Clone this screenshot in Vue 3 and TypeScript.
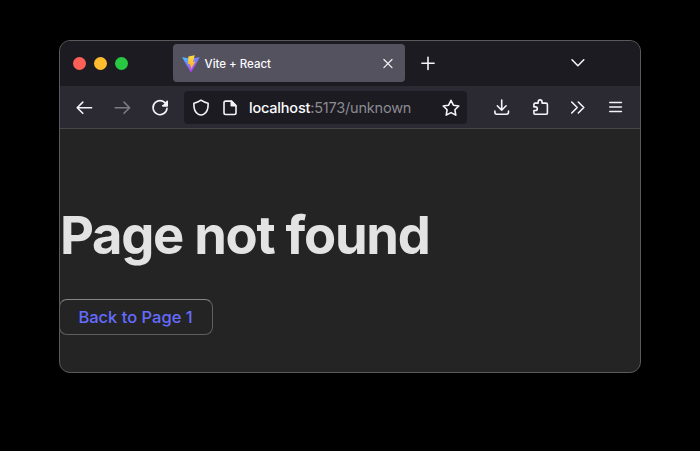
<script setup lang="ts">
interface Icon {
  name: string
  d: string
  muted?: boolean
}

const navigation: Icon[] = [
  { name: 'Back', d: 'M17.6 10.7H3.2M8.8 5.1l-5.6 5.6 5.6 5.6' },
  { name: 'Forward', d: 'M3.2 10.7h14.4M12 5.1l5.6 5.6-5.6 5.6', muted: true },
  { name: 'Reload', d: 'M16.6 8.2A7 7 0 1 0 17 11.4M17.2 4.2v4.5h-4.5' },
]

const tools: Icon[] = [
  { name: 'Downloads', d: 'M9.7 3v10M5.300 8.800l4.400 4.400 4.400-4.400M2.900 14v1.300q0 1.900 1.900 1.900h9.800q1.900 0 1.900-1.900V14' },
  { name: 'Extensions', d: 'M3.900 7.500q0-1.400 1.400-1.400h2.900V4.900q0-2 1.900-2t1.900 2v1.200h4q1.400 0 1.400 1.400v8.400q0 1.400-1.400 1.400H5.300q-1.400 0-1.400-1.400v-2.400h1.400q2 0 2-1.800t-2-1.800H3.900z' },
  { name: 'More tools', d: 'M3.7 5l5.500 5.500-5.500 5.500M10.300 5l5.500 5.500-5.500 5.500' },
  { name: 'Menu', d: 'M3.800 5.500h11.600M3.800 10h11.600M3.800 14.500h11.600' },
]

const lights: string[] = ['close', 'minimize', 'zoom']
</script>

<template>
  <main class="desktop">
    <section class="window">
      <header class="tabs">
        <div class="lights">
          <span v-for="light in lights" :key="light" class="light" :class="light"></span>
        </div>
        <div class="tab">
          <svg class="logo" viewBox="0 0 18 18">
            <defs>
              <linearGradient id="body" x1="0" y1="0" x2="0.6" y2="1">
                <stop offset="0" stop-color="#41c6ff" />
                <stop offset="1" stop-color="#bd34fe" />
              </linearGradient>
              <linearGradient id="bolt" x1="0" y1="0" x2="0" y2="1">
                <stop offset="0" stop-color="#ffdd4a" />
                <stop offset="1" stop-color="#ffa31a" />
              </linearGradient>
            </defs>
            <path d="M.8 2.3 9 3.7l8.1-1.4q.6 0 .4.5L9.4 16.9q-.4.6-.8 0L.4 2.8q-.2-.4.4-.5z" fill="url(#body)" />
            <path d="M12.700.2 6.400 1.500 6 9.200l2.200-.4-.5 2.700 1.500-.4-.6 4 4.700-8.500-2.200.4z" fill="url(#bolt)" />
          </svg>
          <span class="title">Vite + React</span>
          <svg class="icon small" viewBox="0 0 12 12"><path d="M1.9 1.500l8.100 8.100M10 1.500L1.900 9.600" /></svg>
        </div>
        <svg class="icon plus" viewBox="0 0 20 20"><path d="M10 4.200v12.200M3.900 10.300h12.200" /></svg>
        <svg class="icon chevron" viewBox="0 0 20 20"><path d="M4 6.800l5.900 5.900 5.900-5.900" /></svg>
      </header>

      <nav class="toolbar">
        <div class="navigation">
          <svg v-for="icon in navigation" :key="icon.name" class="icon" :class="{ muted: icon.muted }" viewBox="0 0 20 20">
            <path :d="icon.d" />
            <path v-if="icon.name === 'Reload'" class="solid" d="M17.200 4.800v3.900h-3.900z" />
          </svg>
        </div>
        <div class="address">
          <svg class="icon" viewBox="0 0 20 20"><path d="M10 2.200q3.300 2.400 7.100 3v1.700q0 6.600-4.200 9.200-2.900 1.900-5.800 0Q2.900 13.500 2.900 6.900V5.200q3.800-.6 7.100-3z" /></svg>
          <svg class="icon document" viewBox="0 0 20 20">
            <path d="M5.700 3.100h5.900l4.400 4.400v7.300q0 1.700-1.700 1.700H5.700q-1.700 0-1.700-1.700v-10q0-1.700 1.700-1.700z" />
            <path class="solid" d="M11.300 3.300v4.500h4.500z" />
          </svg>
          <span class="url"><b>localhost</b>:5173/unknown</span>
          <svg class="icon star" viewBox="0 0 20 20"><path d="M10 2.300l2.400 4.900 5.400.8-3.900 3.800.9 5.300-4.800-2.500-4.800 2.500.9-5.300L2.200 8l5.400-.8z" /></svg>
        </div>
        <div class="tools">
          <svg v-for="icon in tools" :key="icon.name" class="icon" viewBox="0 0 20 20"><path :d="icon.d" /></svg>
        </div>
      </nav>

      <article class="page">
        <h1>Page not found</h1>
        <button type="button">Back to Page 1</button>
      </article>
    </section>
  </main>
</template>

<style>
body {
  background: #000;
}
</style>

<style scoped>
.desktop {
  box-sizing: border-box;
  height: 451px;
  padding: 40px 59px 78px;
  background: #000;
  font-family: Inter, "Liberation Sans", sans-serif;
}
.window {
  box-sizing: border-box;
  height: 333px;
  display: flex;
  flex-direction: column;
  border: 1px solid #5a5a5c;
  border-radius: 11px;
  background: #242424;
  overflow: hidden;
}
.tabs {
  box-sizing: border-box;
  height: 45px;
  flex: none;
  display: flex;
  align-items: center;
  padding: 0 0 1px 12.5px;
  background: #1c1b22;
}
.lights {
  display: flex;
  gap: 8px;
  width: 100px;
}
.light {
  width: 13px;
  height: 13px;
  border-radius: 50%;
}
.close { background: #ff5f57; }
.minimize { background: #febc2e; }
.zoom { background: #28c840; }
.tab {
  box-sizing: border-box;
  width: 232.5px;
  height: 38px;
  display: flex;
  align-items: center;
  padding: 2px 11px 0 9px;
  border-radius: 4px;
  background: #55525f;
  color: #fbfbfe;
}
.logo {
  width: 18px;
  height: 18px;
  margin-right: 5px;
}
.title {
  flex: 1;
  font-size: 11.5px;
  font-weight: 550;
  letter-spacing: -0.02px;
  white-space: nowrap;
}
.icon {
  display: block;
  flex: none;
  width: 20px;
  height: 20px;
  fill: none;
  stroke: #f4f4f8;
  stroke-width: 1.6;
  stroke-linecap: round;
  stroke-linejoin: round;
}
.small {
  width: 12px;
  height: 12px;
  stroke-width: 1.2;
}
.solid { fill: #f4f4f8; }
.muted { stroke: #7c7b82; }
.plus { margin-left: 13px; }
.chevron { margin-left: 130px; }
.toolbar {
  box-sizing: border-box;
  height: 43px;
  flex: none;
  display: flex;
  align-items: center;
  padding-left: 14px;
  border-bottom: 1px solid #48474c;
  background: #2b2a33;
}
.navigation {
  display: flex;
  gap: 18px;
}
.address {
  box-sizing: border-box;
  width: 283px;
  height: 33px;
  margin: 1px 0 0 14px;
  padding: 0 7px;
  display: flex;
  align-items: center;
  border-radius: 4px;
  background: #1c1b22;
}
.document { margin-left: 9px; }
.star { margin-right: -0.5px; }
.url {
  flex: 1;
  margin-left: 9px;
  font-size: 14.5px;
  letter-spacing: -0.2px;
  white-space: nowrap;
  color: #8b8a91;
}
.url b {
  font-weight: 500;
  color: #fbfbfe;
}
.tools {
  display: flex;
  gap: 18px;
  margin-left: 25px;
}
.page {
  flex: 1;
  color: #e3e3e3;
}
h1 {
  margin: 75px 0 33px;
  font-size: 52.5px;
  line-height: 62px;
  font-weight: 700;
  letter-spacing: -1.3px;
  white-space: nowrap;
}
button {
  box-sizing: border-box;
  display: block;
  width: 153.5px;
  height: 36px;
  margin-left: -1px;
  padding: 0 0.5px 0 0;
  border: 1px solid #5e5f5f;
  border-top-color: #858687;
  border-radius: 8px;
  background: transparent;
  color: #646cff;
  font: 500 16.5px Inter, "Liberation Sans", sans-serif;
}
</style>
